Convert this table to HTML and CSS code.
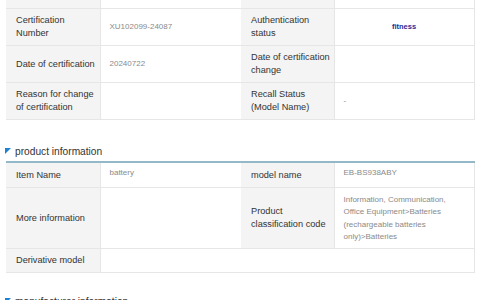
FILE: index.html
```html
<!DOCTYPE html>
<html>
<head>
<meta charset="utf-8">
<link rel="stylesheet" href="styles.css">
</head>
<body>
<div class="page">
  <table class="info first">
    <colgroup><col class="c1"><col class="c2"><col class="c3"><col class="c4"></colgroup>
    <tr class="stub"><th></th><td></td><th></th><td></td></tr>
    <tr class="r37">
      <th>Certification<br>Number</th><td class="val">XU102099-24087</td>
      <th>Authentication<br>status</th><td class="val center"><span class="status">fitness</span></td>
    </tr>
    <tr class="r37">
      <th>Date of certification</th><td class="val">20240722</td>
      <th>Date of certification<br>change</th><td class="val"></td>
    </tr>
    <tr class="r37">
      <th>Reason for change<br>of certification</th><td class="val"></td>
      <th>Recall Status<br>(Model Name)</th><td class="val">-</td>
    </tr>
  </table>

  <h3 class="section"><span class="mark"></span>product information</h3>
  <table class="info second">
    <colgroup><col class="c1"><col class="c2"><col class="c3"><col class="c4"></colgroup>
    <tr class="r25">
      <th>Item Name</th><td class="val top">battery</td>
      <th>model name</th><td class="val top">EB-BS938ABY</td>
    </tr>
    <tr class="r61">
      <th>More information</th><td class="val"></td>
      <th>Product<br>classification code</th>
      <td class="val top multi">Information, Communication,<br>Office Equipment&gt;Batteries<br>(rechargeable batteries<br>only)&gt;Batteries</td>
    </tr>
    <tr class="r24">
      <th>Derivative model</th><td class="val" colspan="3"></td>
    </tr>
  </table>

  <h3 class="section next"><span class="mark"></span>manufacturer information</h3>
</div>
</body>
</html>
```

FILE: styles.css
```css
html, body {
  margin: 0;
  padding: 0;
  background: #ffffff;
}
body {
  font-family: "Liberation Sans", Arial, sans-serif;
  color: #333333;
  overflow: hidden;
}
.page {
  padding: 0 6px;
  width: 468px;
}
.info {
  width: 468px;
  border-collapse: collapse;
  table-layout: fixed;
  border-right: 1px solid #e6e6e6;
  border-bottom: 1px solid #e6e6e6;
}
.c1 { width: 94px; }
.c2 { width: 141px; }
.c3 { width: 93px; }
.c4 { width: 140px; }
.info th, .info td {
  border-top: 1px solid #e6e6e6;
  padding: 0;
  font-size: 9.2px;
  line-height: 13px;
  white-space: nowrap;
}
.info th {
  background: #f4f4f4;
  font-weight: normal;
  text-align: left;
  padding-left: 10px;
  border-right: 1px solid #e6e6e6;
  color: #333333;
  vertical-align: middle;
}
.info td.val {
  padding-left: 9px;
  color: #8a8a8a;
  font-size: 8px;
  line-height: 12px;
  vertical-align: middle;
}
.info td.top {
  vertical-align: top;
  padding-top: 4px;
}
.info td.multi {
  line-height: 12.3px;
  padding-top: 6px;
}
.info td.center {
  text-align: center;
  padding-left: 0;
}
.status {
  color: #2a2a96;
  font-weight: bold;
  font-size: 7.5px;
}
.first .stub th, .first .stub td {
  border-top: none;
  height: 8px;
}
.r37 th { height: 36px; }
.second { border-top: 2px solid #93b8c7; }
.second tr:first-child th, .second tr:first-child td { border-top: none; }
.r25 th { height: 24px; }
.r61 th { height: 60px; }
.r24 th { height: 23px; }
.section {
  margin: 0;
  padding: 22px 0 0 0;
  height: 19px;
  font-size: 10.2px;
  line-height: 19px;
  font-weight: normal;
  color: #333333;
  display: flex;
  align-items: center;
  gap: 4px;
  margin-left: -1px;
}
.section.next { padding-top: 19px; }
.mark {
  width: 0;
  height: 0;
  border-top: 6px solid #1e82d2;
  border-right: 6px solid transparent;
  margin-top: -2px;
}
```
